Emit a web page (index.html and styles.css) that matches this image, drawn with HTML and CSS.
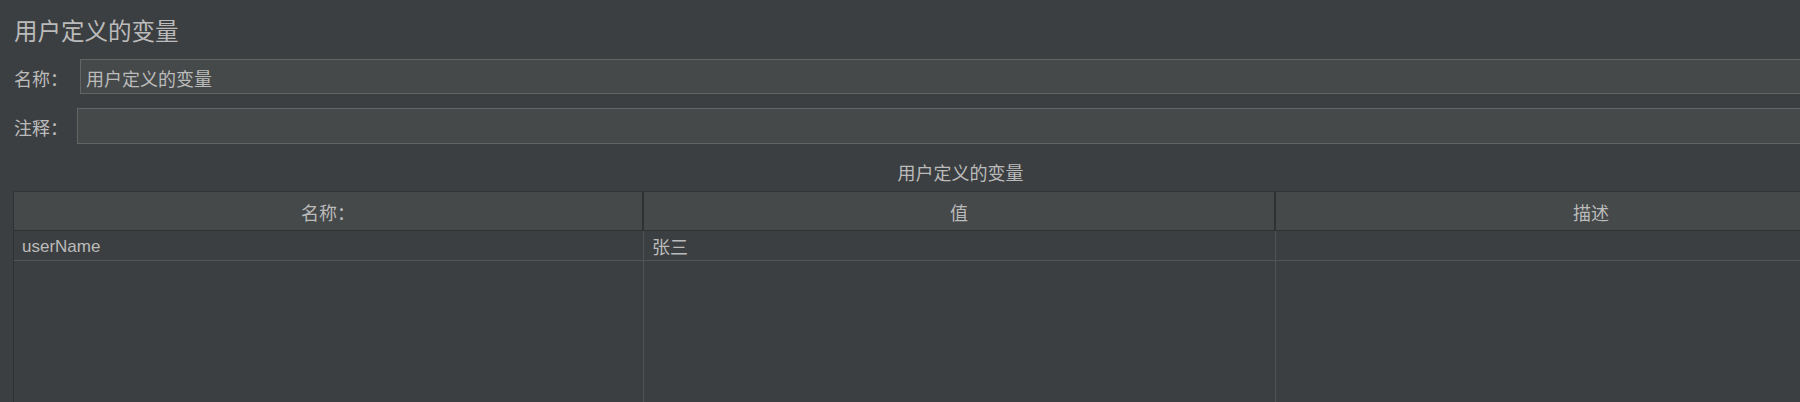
FILE: index.html
```html
<!DOCTYPE html>
<html lang="zh-CN">
<head>
    <meta charset="UTF-8">
    <title>用户定义的变量</title>
    <link rel="stylesheet" href="styles.css">
</head>
<body>
    <div class="panel">
        <h1 class="title">用户定义的变量</h1>
        <div class="field">
            <label class="field-label">名称：</label>
            <input class="field-input" type="text" value="用户定义的变量">
        </div>
        <div class="field field-comment">
            <label class="field-label">注释：</label>
            <input class="field-input" type="text" value="">
        </div>
        <div class="caption">用户定义的变量</div>
        <div class="vars-table">
            <div class="head-row">
                <div class="head-cell">名称：</div>
                <div class="head-cell">值</div>
                <div class="head-cell">描述</div>
            </div>
            <div class="data-row">
                <div class="cell cell-latin">userName</div>
                <div class="cell">张三</div>
                <div class="cell"></div>
            </div>
            <div class="filler-row">
                <div class="cell"></div>
                <div class="cell"></div>
                <div class="cell"></div>
            </div>
        </div>
    </div>
</body>
</html>
```

FILE: styles.css
```css
html, body {
    margin: 0;
    height: 100%;
}
body {
    background: #3c3f41;
    color: #bbbbbb;
    font-family: "Noto Sans CJK SC", "Liberation Sans", sans-serif;
    font-size: 18px;
    overflow: hidden;
}
.panel {
    display: flex;
    flex-direction: column;
    height: 100%;
    width: 1920px;
    padding-left: 13px;
}
.title {
    margin: 0;
    padding-top: 18px;
    font-size: 23.5px;
    font-weight: normal;
    line-height: 24px;
    height: 24px;
    padding-left: 1px;
}
.field {
    display: flex;
    align-items: center;
    margin-top: 17px;
    height: 35px;
}
.field-comment {
    margin-top: 14px;
    height: 36px;
}
.field-label {
    flex-shrink: 0;
    width: 56px;
    padding-left: 1px;
    line-height: 20px;
    padding-top: 2px;
    white-space: nowrap;
}
.field-comment .field-label {
    width: 53px;
}
.field-input {
    flex: 1;
    height: 100%;
    box-sizing: border-box;
    margin: 0 11px 0 10px;
    background: #45494a;
    border: 1px solid #646464;
    color: #bbbbbb;
    font-family: "Noto Sans CJK SC", sans-serif;
    font-size: 18px;
    padding: 3px 5px 0;
    outline: none;
}
.caption {
    margin-top: 16px;
    height: 24px;
    line-height: 24px;
    width: 1895px;
    text-align: center;
}
.vars-table {
    margin-top: 7px;
    width: 1895px;
    flex: 1;
    display: flex;
    flex-direction: column;
    border-left: 1px solid #2f3133;
}
.head-row, .data-row, .filler-row {
    display: grid;
    grid-template-columns: 630px 632px 632px;
}
.head-row {
    height: 38px;
    background: #45494a;
    border-top: 1px solid #333537;
    border-bottom: 1px solid #2f3133;
}
.head-cell {
    display: flex;
    align-items: center;
    justify-content: center;
    padding-top: 2px;
    border-right: 2px solid #2f3133;
}
.data-row {
    height: 29px;
    border-bottom: 1px solid #515557;
}
.cell {
    border-right: 1px solid #4f5355;
    padding-left: 8px;
    line-height: 29px;
    padding-top: 1px;
    box-sizing: border-box;
}
.cell-latin {
    font-family: "Liberation Sans", "Noto Sans CJK SC", sans-serif;
    font-size: 17px;
}
.filler-row {
    flex: 1;
}
```
